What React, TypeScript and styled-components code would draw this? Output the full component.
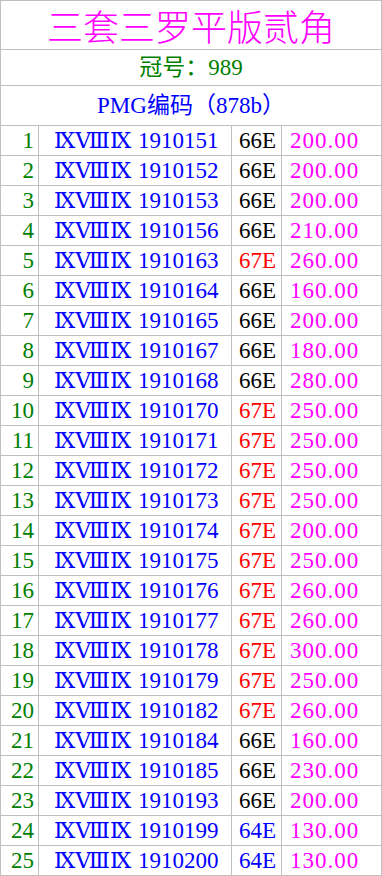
import * as React from 'react';
import styled, { createGlobalStyle } from 'styled-components';

const GlobalStyle = createGlobalStyle`
    html, body {
        margin: 0;
        padding: 0;
        background: #ffffff;
    }
`;

type Row = { no: number; serial: string; code: string; price: string };

const rows: Row[] = [
    { no: 1, serial: '1910151', code: '66E', price: '200.00' },
    { no: 2, serial: '1910152', code: '66E', price: '200.00' },
    { no: 3, serial: '1910153', code: '66E', price: '200.00' },
    { no: 4, serial: '1910156', code: '66E', price: '210.00' },
    { no: 5, serial: '1910163', code: '67E', price: '260.00' },
    { no: 6, serial: '1910164', code: '66E', price: '160.00' },
    { no: 7, serial: '1910165', code: '66E', price: '200.00' },
    { no: 8, serial: '1910167', code: '66E', price: '180.00' },
    { no: 9, serial: '1910168', code: '66E', price: '280.00' },
    { no: 10, serial: '1910170', code: '67E', price: '250.00' },
    { no: 11, serial: '1910171', code: '67E', price: '250.00' },
    { no: 12, serial: '1910172', code: '67E', price: '250.00' },
    { no: 13, serial: '1910173', code: '67E', price: '250.00' },
    { no: 14, serial: '1910174', code: '67E', price: '200.00' },
    { no: 15, serial: '1910175', code: '67E', price: '250.00' },
    { no: 16, serial: '1910176', code: '67E', price: '260.00' },
    { no: 17, serial: '1910177', code: '67E', price: '260.00' },
    { no: 18, serial: '1910178', code: '67E', price: '300.00' },
    { no: 19, serial: '1910179', code: '67E', price: '250.00' },
    { no: 20, serial: '1910182', code: '67E', price: '260.00' },
    { no: 21, serial: '1910184', code: '66E', price: '160.00' },
    { no: 22, serial: '1910185', code: '66E', price: '230.00' },
    { no: 23, serial: '1910193', code: '66E', price: '200.00' },
    { no: 24, serial: '1910199', code: '64E', price: '130.00' },
    { no: 25, serial: '1910200', code: '64E', price: '130.00' },
];

const codeColor: Record<string, string> = {
    '66E': '#000000',
    '67E': '#ff0000',
    '64E': '#0000ff',
};

// header rows 48/35/39 tall, then 25 data rows of 29 (+1px rule each)
const Sheet = styled.div`
    display: grid;
    grid-template-columns: 37px 192px 49px 99px;
    grid-template-rows: 48px 35px 39px repeat(25, 29px);
    gap: 1px;
    padding: 1px;
    width: 380px;
    background: #c0c0c0;
    font-family: "Liberation Serif", "Noto Sans CJK SC", serif;
`;

const Banner = styled.div<{ $color: string; $size: number }>`
    grid-column: 1 / -1;
    background: #ffffff;
    color: ${p => p.$color};
    font-size: ${p => p.$size}px;
    line-height: 1;
    display: flex;
    align-items: center;
    justify-content: center;
    white-space: nowrap;
`;

const Title = styled.span`
    font-family: "Noto Sans CJK SC", serif;
    font-weight: 300;
`;

const Cell = styled.div<{ $color: string; $align?: string; $pad?: string; $spacing?: number }>`
    background: #ffffff;
    color: ${p => p.$color};
    font-size: 23px;
    line-height: 1;
    letter-spacing: ${p => p.$spacing || 0}px;
    display: flex;
    align-items: center;
    justify-content: ${p => p.$align || 'flex-start'};
    padding: ${p => p.$pad || '0'};
    white-space: nowrap;
    overflow: hidden;
`;

const Roman = styled.span`
    font-family: "DejaVu Serif", "Noto Sans CJK SC", serif;
    font-size: 22px;
    width: 84px;
`;

const App: React.FC = () => (
    <>
        <GlobalStyle />
        <Sheet>
            <Banner $color="#ff00ff" $size={36}>
                <Title>三套三罗平版贰角</Title>
            </Banner>
            <Banner $color="#008000" $size={23}>冠号：989</Banner>
            <Banner $color="#0000ff" $size={23}>PMG编码（878b）</Banner>
            {rows.map(r => (
                <React.Fragment key={r.no}>
                    <Cell $color="#008000" $align="flex-end" $pad="0 4px 0 0">{r.no}</Cell>
                    <Cell $color="#0000ff" $pad="0 0 0 15px">
                        <Roman>ⅨⅧⅨ</Roman>
                        {r.serial}
                    </Cell>
                    <Cell $color={codeColor[r.code]} $pad="0 0 0 7px">{r.code}</Cell>
                    <Cell $color="#ff00ff" $pad="0 0 0 8px" $spacing={1}>{r.price}</Cell>
                </React.Fragment>
            ))}
        </Sheet>
    </>
);

export default App;
